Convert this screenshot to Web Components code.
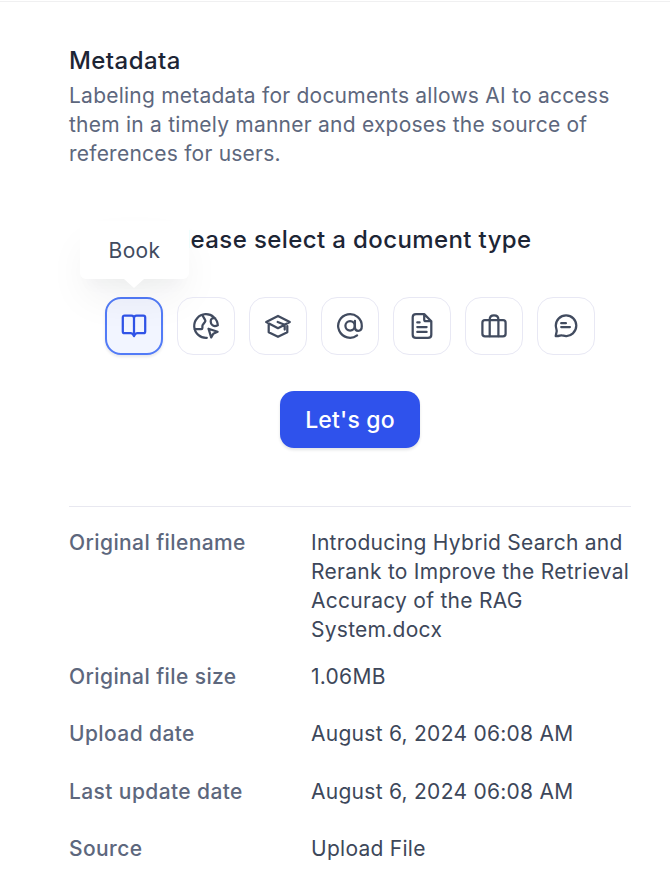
<!DOCTYPE html>
<html lang="en">
<head>
<meta charset="utf-8">
<title>Metadata</title>
<style>
body{margin:0;background:#fff;font-family:Inter,"Liberation Sans",sans-serif;overflow:hidden}
</style>
</head>
<body>
<metadata-panel>
  <panel-intro heading="Metadata">Labeling metadata for documents allows AI to access them in a timely manner and exposes the source of references for users.</panel-intro>
  <type-picker heading="Please select a document type">
    <type-tile icon="book" selected tip="Book"></type-tile>
    <type-tile icon="web"></type-tile>
    <type-tile icon="paper"></type-tile>
    <type-tile icon="at"></type-tile>
    <type-tile icon="doc"></type-tile>
    <type-tile icon="case"></type-tile>
    <type-tile icon="chat"></type-tile>
  </type-picker>
  <primary-button>Let's go</primary-button>
  <field-list>
    <field-row label="Original filename">Introducing Hybrid Search and Rerank to Improve the Retrieval Accuracy of the RAG System.docx</field-row>
    <field-row label="Original file size">1.06MB</field-row>
    <field-row label="Upload date">August 6, 2024 06:08 AM</field-row>
    <field-row label="Last update date">August 6, 2024 06:08 AM</field-row>
    <field-row label="Source">Upload File</field-row>
  </field-list>
</metadata-panel>
<script>
const ICONS = {
  book: '<path d="M15 7.2C15 5.6 14 4.6 12.4 4.6H5.6C4.4 4.6 3.8 5.2 3.8 6.4V20.4C3.8 21.6 4.4 22.2 5.6 22.2H11.6C13.4 22.2 14.2 23.2 15 25.2C15.8 23.2 16.6 22.2 18.4 22.2H24.4C25.6 22.2 26.2 21.6 26.2 20.4V6.4C26.2 5.2 25.6 4.6 24.4 4.6H17.6C16 4.6 15 5.6 15 7.2V25"/>',
  web: '<path d="M15.8 26.8A11.8 11.8 0 1 1 26.8 14.4M3.4 18.1H10.3C11 18.1 11.4 17.7 11.4 17V14.9C11.4 14.2 11.7 13.8 12.2 13.2L14 10.8C14.5 10.2 14.5 9.5 14.1 8.9L11.4 4.2M24.2 7.4C21.4 6.4 19.6 8 19.7 10.4C19.8 13 21.8 15 23.8 15C25.2 15 26 14.6 26.8 14.2"/><path d="M17.5 17.7L26.6 20.7L22.3 22.7L20.2 26.4Z"/>',
  paper: '<path d="M3.2 11L15 4.9L26.8 11L15 17.2ZM5.7 13V21.2L15 25.8L24.3 21.2V15M14.7 11L21.7 13.8V18.6"/>',
  at: '<circle cx="15.1" cy="14.8" r="4.7"/><path d="M19.9 9.8V16.2C19.9 18.4 21.2 19.8 23.2 19.8C25.4 19.8 26.8 18.2 26.8 15.2A11.8 11.8 0 1 0 22.1 24.4"/>',
  doc: '<path d="M17.2 3.1H9C6.8 3.1 5.7 4.3 5.7 6.3V23.7C5.7 25.7 6.8 26.9 9 26.9H21C23.2 26.9 24.3 25.7 24.3 23.7V10.2ZM17.2 3.3V8.4C17.2 9.6 17.8 10.2 19 10.2H24.2M10.3 11.4H12.6M10.3 16.1H19.6M10.3 20.9H19.6"/>',
  case: '<rect x="3.4" y="9.2" width="23.2" height="16.2" rx="2.6"/><path d="M10.7 25.2V8.4C10.7 5.8 12.2 4.3 15 4.3C17.8 4.3 19.4 5.8 19.4 8.4V25.2"/>',
  chat: '<path d="M15 25.1C19.7 25.4 25.3 21.2 25.3 14.6C25.3 8.8 20.7 4.4 15.1 4.4C9.4 4.4 4.8 8.8 4.8 14.6C4.8 17.4 6.1 18.6 5.6 20.8L4.7 25.1C8 25.4 9 24.2 10.7 24.3C12.2 24.4 13 25 15 25.1ZM10.2 12.2H14.9M10.2 16.1H18.9"/>'
};
function define(name, html, setup) {
  const template = document.createElement('template');
  template.innerHTML = html;
  customElements.define(name, class extends HTMLElement {
    constructor() {
      super();
      this.attachShadow({mode: 'open'}).append(template.content.cloneNode(true));
    }
    connectedCallback() { if (setup) setup(this, this.shadowRoot); }
  });
}
define('metadata-panel', `<style>
  :host{display:flex;flex-direction:column;box-sizing:border-box;height:892px;border-top:1px solid transparent;padding:43px 39px 0 69px;box-shadow:inset 0 1px #f0f0f1}
</style><slot></slot>`);
define('panel-intro', `<style>
  :host{display:block;color:#5d677d;font-size:21px;line-height:29px;letter-spacing:.23px}
  h2{margin:0 0 3px;font-size:24px;font-weight:540;line-height:34px;letter-spacing:.43px;color:#1d2535}
  p{margin:0;width:552px}
</style><h2></h2><p><slot></slot></p>`, (el, root) => { root.querySelector('h2').textContent = el.getAttribute('heading'); });
define('type-picker', `<style>
  :host{display:flex;flex-direction:column;align-items:center;padding-top:55px}
  h3{margin:0;font-size:24px;font-weight:540;line-height:34px;letter-spacing:.39px;color:#1d2535;white-space:nowrap}
  div{display:flex;gap:14px;padding-top:40px}
</style><h3></h3><div><slot></slot></div>`, (el, root) => { root.querySelector('h3').textContent = el.getAttribute('heading'); });
define('type-tile', `<style>
  :host{display:grid;place-items:center;position:relative;box-sizing:border-box;width:58px;height:58px;border:1px solid #e8e8f4;border-radius:16px;color:#414b5f}
  :host([selected]){border:2px solid #527bf7;background:#f2f5ff;color:#3053e7;box-shadow:0 2px 3px rgba(16,24,40,.1)}
  svg{width:30px;height:30px;fill:none;stroke:currentColor;stroke-width:2.25;stroke-linejoin:round;stroke-linecap:round}
  .tip{position:absolute;left:-27px;bottom:calc(100% + 20px);box-sizing:border-box;width:109px;height:58px;display:grid;place-items:center;background:#fff;border-radius:6px;color:#414b5f;font-size:21px;line-height:29px;letter-spacing:.35px;box-shadow:0 22px 43px -7px rgba(16,24,40,.07),0 14px 14px -7px rgba(16,24,40,.025)}
  .tip::after{content:"";position:absolute;left:44px;top:100%;border:10px solid transparent;border-top:9.5px solid #fff;border-bottom:0}
</style><svg viewBox="0 0 30 30"></svg>`, (el, root) => {
  root.querySelector('svg').innerHTML = ICONS[el.getAttribute('icon')];
  if (el.hasAttribute('tip')) {
    const tip = document.createElement('div');
    tip.className = 'tip';
    tip.textContent = el.getAttribute('tip');
    root.append(tip);
  }
});
define('primary-button', `<style>
  :host{display:flex;justify-content:center;padding-top:36px}
  button{width:140px;height:57px;padding:0;border:0;border-radius:14px;background:#2f52ec;color:#fff;font:540 23px/32px Inter,"Liberation Sans",sans-serif;letter-spacing:.2px;box-shadow:0 2px 3px rgba(16,24,40,.12)}
</style><button><slot></slot></button>`);
define('field-list', `<style>
  :host{display:flex;flex-direction:column;gap:12px;margin-top:58px;padding-top:18px;border-top:1px solid #e8e8f0}
</style><slot></slot>`);
define('field-row', `<style>
  :host{display:grid;grid-template-columns:242px 1fr;align-items:start;min-height:45.4px;box-sizing:border-box;padding:3px 0;font-size:21px;line-height:29px;letter-spacing:.27px}
  b{font-weight:500;color:#5d677d;letter-spacing:.4px}
  span{color:#3d475a;width:324px}
</style><b></b><span><slot></slot></span>`, (el, root) => { root.querySelector('b').textContent = el.getAttribute('label'); });
</script>
</body>
</html>
